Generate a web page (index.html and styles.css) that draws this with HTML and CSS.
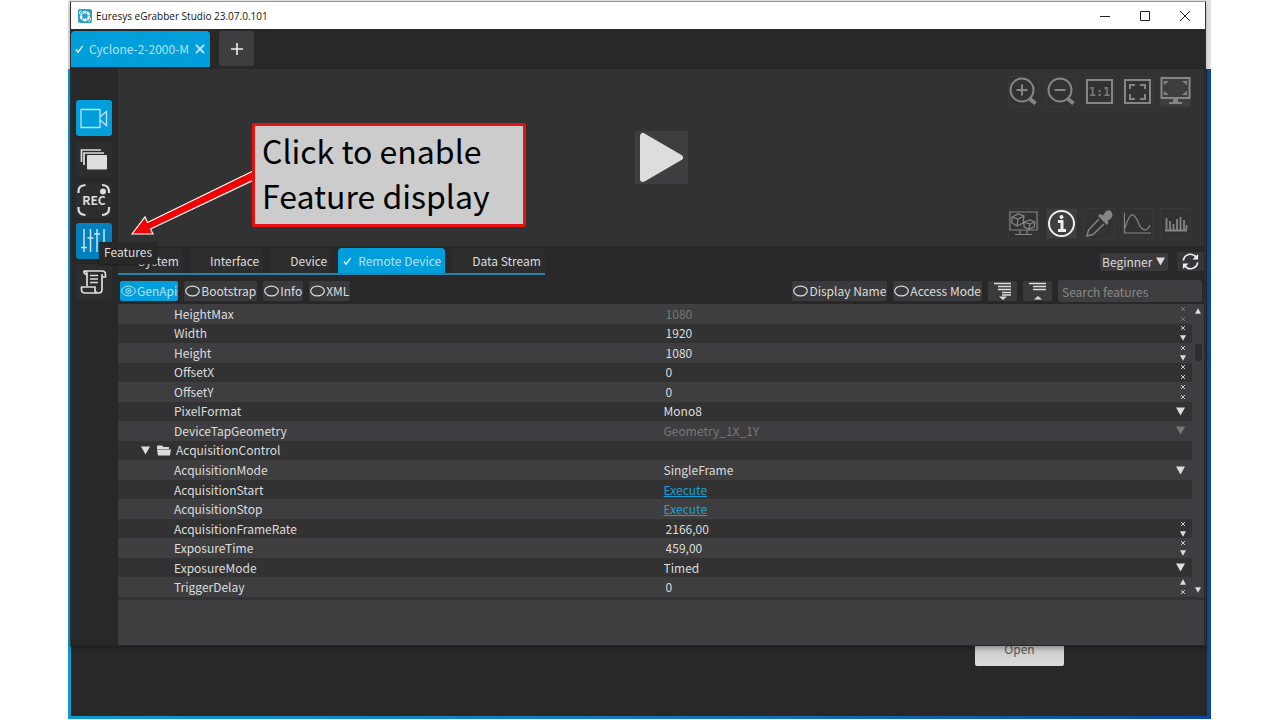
FILE: index.html
```html
<!DOCTYPE html>
<html lang="en">
<head>
<meta charset="utf-8">
<title>Euresys eGrabber Studio</title>
<link rel="stylesheet" href="styles.css">
</head>
<body>
<svg class="defs" aria-hidden="true">
  <symbol id="cross" viewBox="0 0 6 6"><path d="M1 1l4 4M5 1l-4 4" stroke="currentColor" stroke-width=".9"/></symbol>
  <symbol id="down" viewBox="0 0 10 9"><path d="M0 0h10L5 9z" fill="currentColor"/></symbol>
  <symbol id="up" viewBox="0 0 10 9"><path d="M0 9h10L5 0z" fill="currentColor"/></symbol>
  <symbol id="oval" viewBox="0 0 15 12"><ellipse cx="7.5" cy="6" rx="6.8" ry="4.9" fill="none" stroke="currentColor" stroke-width="1.2"/></symbol>
  <symbol id="check" viewBox="0 0 10 10"><path d="M1 5.500l2.500 3L8.500 1.500" fill="none" stroke="currentColor" stroke-width="1.500"/></symbol>
</svg>
<div class="desktop">
  <div class="back-window"><button class="open">Open</button></div>

  <main class="window">
    <header class="titlebar">
      <svg class="logo" viewBox="0 0 14 14"><rect width="14" height="14" rx="2" fill="#2b9fd0"/><circle cx="7" cy="7" r="4" fill="none" stroke="#fff" stroke-width="2.400"/><path d="M7 1l2 3M13 6l-4 1M10 12l-2-3M4 12l1-4M1 6l4 0M4 2l1 3" stroke="#2b9fd0" stroke-width=".8"/><path d="M1.500 5V3l2-1.500M12.500 9v2l-2 1.500" stroke="#e6f5fb" fill="none"/></svg>
      <h1>Euresys eGrabber Studio 23.07.0.101</h1>
      <div class="window-buttons">
        <button aria-label="Minimize"><svg viewBox="0 0 10 10"><path d="M0 5.500h10" stroke="#222"/></svg></button>
        <button aria-label="Maximize"><svg viewBox="0 0 10 10"><path d="M.5.5h9v9h-9z" fill="none" stroke="#222"/></svg></button>
        <button aria-label="Close"><svg viewBox="0 0 10 10"><path d="M0 0l10 10M10 0L0 10" stroke="#222"/></svg></button>
      </div>
    </header>

    <nav class="sessions">
      <button class="session"><svg class="tick"><use href="#check"/></svg>Cyclone-2-2000-M<svg class="close"><use href="#cross"/></svg></button>
      <button class="add" aria-label="New session"><svg viewBox="0 0 12 12"><path d="M6 0v12M0 6h12" stroke="#eee" stroke-width="1.600"/></svg></button>
    </nav>

    <div class="body">
      <aside class="rail">
        <button class="on" aria-label="Camera"><svg viewBox="0 0 36 36" fill="none" stroke="#b9e4f7" stroke-width="1.300"><path d="M5 9.500h19v18H5zM24 17l6.500-5.500v14L24 20z"/></svg></button>
        <button aria-label="Gallery"><svg viewBox="0 0 36 36"><path d="M5.500 21V9H25M8 24v-12H28" fill="none" stroke="#ddd" stroke-width="1.700"/><rect x="11" y="14" width="20" height="14.500" rx="1" fill="#ddd"/></svg></button>
        <button aria-label="Record"><svg viewBox="0 0 36 36"><path d="M2.500 11V9q0-5.500 7-6M2.500 25v2q0 5.500 7 6M33 25v2q0 5.500-7 6M26 3q6.500 0 7 6v2" fill="none" stroke="#ddd" stroke-width="2.200"/><circle cx="27" cy="9.500" r="3" fill="#ddd"/><text x="18" y="23" text-anchor="middle">REC</text></svg></button>
        <button class="on features" aria-label="Features"><svg viewBox="0 0 36 36" stroke="#c4e4f3" stroke-width="1.500"><path d="M8 6v23M14.500 6v23M21 6v23M28 6v23M5 24.500h6M11.500 15h6M18 11h6M25 22h6"/></svg></button>
        <button aria-label="Script"><svg viewBox="0 0 36 36" fill="none" stroke="#ddd" stroke-width="1.700"><path d="M11 22V10q0-3-3-3h18q3.500 0 3.500 3.500V13H26M26 10v15q0 4-3.500 4H9q-3.500 0-3.500-3.500V23H19v3q0 3 3 3M14 11.500h8M14 15h8M14 18.500h8M8 7q-1 2 3 4"/></svg></button>
      </aside>

      <div class="content">
        <section class="viewer">
          <div class="tools">
            <button aria-label="Zoom in"><svg viewBox="0 0 31 31"><circle cx="14" cy="14" r="11.500"/><path d="M14 8.500v11M8.500 14h11"/><path d="M22 23l5.500 4.500" stroke-width="4"/></svg></button>
            <button aria-label="Zoom out"><svg viewBox="0 0 31 31"><circle cx="14" cy="14" r="11.500"/><path d="M8.500 14h11"/><path d="M22 23l5.500 4.500" stroke-width="4"/></svg></button>
            <button aria-label="Actual size"><svg viewBox="0 0 31 31"><path d="M3 4h25v23H3z"/><text x="15.500" y="20" text-anchor="middle">1:1</text></svg></button>
            <button aria-label="Fit"><svg viewBox="0 0 31 31"><path d="M3 4h25v23H3zM8 13V9h5M18 9h5v4M23 18v5h-5M13 23H8v-5"/></svg></button>
            <button class="lit" aria-label="Full screen"><svg viewBox="0 0 31 31"><path d="M1.500 2h28v20h-28z"/><path d="M4 9V5h5zM27 9V5h-5zM4 15v4h5zM27 15v4h-5zM13 22h5v4h4v2H9v-2h4z" fill="#858585" stroke="none"/></svg></button>
          </div>
          <button class="play" aria-label="Play"><svg viewBox="0 0 53 53"><path d="M8 5v43l37-21.500z" fill="#ddd" stroke="#ddd" stroke-width="6" stroke-linejoin="round"/></svg></button>
          <div class="tools">
            <button aria-label="3D view"><svg viewBox="0 0 31 31" class="thin"><path d="M2 4h27v18H2zM12 22v4M19 22v4M7 26.500h17M4 9l6-3 6 2-1 7-6 3-5-3zM4 9l6 2 6-3M10 11l-1 7M16 14l6-2 5 2-1 5-5 2-5-2zM16 14l6 2 5-2M22 16l-1 5"/></svg></button>
            <button class="lit info" aria-label="Info"><svg viewBox="0 0 31 31"><circle cx="15.500" cy="15.500" r="12.500"/><path d="M12 13.500h4v8M12 22.500h8" stroke-width="3"/><circle cx="15.500" cy="9" r="1" /></svg></button>
            <button aria-label="Pick color"><svg viewBox="0 0 31 31"><path d="M15 11L4.500 22 3 28l6-1.500L20 16" stroke-width="1.500"/><path d="M14 8l9 9 1.500-2-1-2c5-3 6-6 4-9s-6-2-8.500 3.500L16 6z" fill="#858585" stroke="none"/></svg></button>
            <button aria-label="Profile"><svg viewBox="0 0 31 31" class="thin"><path d="M2.500 5v20H29M3 20C8 3 12 4 16 14s9 10 12 3"/></svg></button>
            <button aria-label="Histogram"><svg viewBox="0 0 31 31" class="thin"><path d="M5 22.500h22M6.500 10v12M10 13v9M13.500 16v6M17 11v11M20.500 9v13M24 12v10M26.500 17v5" stroke-width="1.800"/></svg></button>
          </div>
        </section>

        <div class="module-bar">
          <nav class="modules">
            <button>System</button><button>Interface</button><button>Device</button><button class="current"><svg class="tick"><use href="#check"/></svg>Remote Device</button><button>Data Stream</button>
          </nav>
          <div class="level">
            <label class="picker"><select aria-label="Visibility level"><option>Beginner</option></select><svg><use href="#down"/></svg></label>
            <button class="refresh" aria-label="Refresh"><svg viewBox="0 0 20 20" fill="none" stroke="#eee" stroke-width="1.800"><path d="M2.500 9A7.500 7.500 0 0 1 16 5.500M17.500 11A7.500 7.500 0 0 1 4 14.500"/><path d="M18 2v6h-6zM2 18v-6h6z" fill="#eee" stroke="none"/></svg></button>
          </div>
        </div>

        <div class="filters">
          <button class="chip active" aria-pressed="true"><svg viewBox="0 0 15 12"><ellipse cx="7.500" cy="6" rx="6.800" ry="4.900" fill="none" stroke="currentColor"/><circle cx="7.500" cy="6" r="2.600" fill="none" stroke="currentColor"/><circle cx="7.500" cy="6" r="1" fill="currentColor"/></svg>GenApi</button>
          <button class="chip"><svg><use href="#oval"/></svg>Bootstrap</button>
          <button class="chip"><svg><use href="#oval"/></svg>Info</button>
          <button class="chip"><svg><use href="#oval"/></svg>XML</button>
          <span class="spacer"></span>
          <button class="chip"><svg><use href="#oval"/></svg>Display Name</button>
          <button class="chip"><svg><use href="#oval"/></svg>Access Mode</button>
          <button class="tree" aria-label="Expand all"><svg viewBox="0 0 29 20"><path d="M6 2.500h17M10 5.500h13M10 8.500h13M14 11.500h9M14 14h9" stroke="#ddd" stroke-width="1.500"/><path d="M11 15.500h8l-4 3.500z" fill="#ddd"/></svg></button>
          <button class="tree" aria-label="Collapse all"><svg viewBox="0 0 29 20"><path d="M6 2.500h17M10 5.500h13M10 8.500h13" stroke="#ddd" stroke-width="1.500"/><path d="M11 18.500h8l-4-3.500z" fill="#ddd"/></svg></button>
          <input class="search" type="text" placeholder="Search features" aria-label="Search features">
        </div>

        <div class="grid-area">
          <table class="features-table">
            <tbody>
            <tr class="off"><th>HeightMax</th><td><input value="1080" aria-label="HeightMax" disabled></td><td class="ctl"><span class="spin"><svg><use href="#cross"/></svg><svg><use href="#cross"/></svg></span></td></tr>
            <tr><th>Width</th><td><input value="1920" aria-label="Width"></td><td class="ctl"><span class="spin"><svg><use href="#cross"/></svg><svg><use href="#down"/></svg></span></td></tr>
            <tr><th>Height</th><td><input value="1080" aria-label="Height"></td><td class="ctl"><span class="spin"><svg><use href="#cross"/></svg><svg><use href="#down"/></svg></span></td></tr>
            <tr><th>OffsetX</th><td><input value="0" aria-label="OffsetX"></td><td class="ctl"><span class="spin"><svg><use href="#cross"/></svg><svg><use href="#cross"/></svg></span></td></tr>
            <tr><th>OffsetY</th><td><input value="0" aria-label="OffsetY"></td><td class="ctl"><span class="spin"><svg><use href="#cross"/></svg><svg><use href="#cross"/></svg></span></td></tr>
            <tr><th>PixelFormat</th><td><select aria-label="PixelFormat"><option>Mono8</option></select></td><td class="ctl"><svg class="drop"><use href="#down"/></svg></td></tr>
            <tr class="off"><th>DeviceTapGeometry</th><td><select aria-label="DeviceTapGeometry" disabled><option>Geometry_1X_1Y</option></select></td><td class="ctl"><svg class="drop"><use href="#down"/></svg></td></tr>
            <tr class="group"><th><span class="branch"><svg class="caret"><use href="#down"/></svg><svg class="folder" viewBox="0 0 14 11"><path d="M0 10V1.500Q0 .5 1 .5h4l1.500 1.500H12V4H0zM0 4.500H14l-1 6H1z" fill="#ddd"/></svg>AcquisitionControl</span></th><td></td><td></td></tr>
            <tr><th>AcquisitionMode</th><td><select aria-label="AcquisitionMode"><option>SingleFrame</option></select></td><td class="ctl"><svg class="drop"><use href="#down"/></svg></td></tr>
            <tr><th>AcquisitionStart</th><td><a href="#">Execute</a></td><td></td></tr>
            <tr><th>AcquisitionStop</th><td><a href="#">Execute</a></td><td></td></tr>
            <tr><th>AcquisitionFrameRate</th><td><input value="2166,00" aria-label="AcquisitionFrameRate"></td><td class="ctl"><span class="spin"><svg><use href="#cross"/></svg><svg><use href="#down"/></svg></span></td></tr>
            <tr><th>ExposureTime</th><td><input value="459,00" aria-label="ExposureTime"></td><td class="ctl"><span class="spin"><svg><use href="#cross"/></svg><svg><use href="#down"/></svg></span></td></tr>
            <tr><th>ExposureMode</th><td><select aria-label="ExposureMode"><option>Timed</option></select></td><td class="ctl"><svg class="drop"><use href="#down"/></svg></td></tr>
            <tr><th>TriggerDelay</th><td><input value="0" aria-label="TriggerDelay"></td><td class="ctl"><span class="spin"><svg><use href="#up"/></svg><svg><use href="#cross"/></svg></span></td></tr>
            </tbody>
          </table>
          <div class="scrollbar"><svg><use href="#up"/></svg><span class="thumb"></span><svg><use href="#down"/></svg></div>
        </div>
        <div class="description"></div>
      </div>
    </div>

    <div class="tooltip" role="tooltip">Features</div>
    <svg class="arrow" viewBox="0 0 124 68"><path d="M0 64L13 47l2.500 5.500L121 1l4 7.500L18.500 59l2.500 5z" fill="#f00000" stroke="#fff" stroke-width="1.200"/></svg>
    <div class="callout">Click to enable Feature display</div>
  </main>
</div>
</body>
</html>
```

FILE: styles.css
```css
* { box-sizing: border-box; }
body {
  margin: 0;
  background: #fff;
  color: #ddd;
  font: 12px/18px "Noto Sans CJK SC", "Noto Sans", sans-serif;
}
button, input, select {
  margin: 0;
  padding: 0;
  border: 0;
  background: none;
  color: inherit;
  font: inherit;
  appearance: none;
}
button { display: flex; align-items: center; justify-content: center; white-space: nowrap; }
svg { display: block; flex: none; }
.defs { width: 0; height: 0; position: absolute; }

.desktop {
  display: grid;
  min-height: 100vh;
  padding: 0 69px 1px 68px;
  background: linear-gradient(#e2e2e2, #e2e2e2) 0 0 / 100% 69px no-repeat content-box;
  background-origin: content-box;
}
.desktop > * { grid-area: 1 / 1; }
.back-window {
  display: flex;
  align-items: flex-end;
  justify-content: flex-end;
  margin-top: 69px;
  padding: 0 147px 53px 0;
  background: linear-gradient(#282828, #282828) 3px 0 / calc(100% - 7px) calc(100% - 3px) no-repeat,
    linear-gradient(90deg, #1098d0, #1470b4 60%, #0c48a0);
}
.open {
  width: 89px;
  height: 34px;
  border-radius: 2px;
  background: linear-gradient(#bbb, #ddd);
  color: #555;
}

.window {
  position: relative;
  align-self: start;
  margin: 1px 5px 0 2px;
  border: 1px solid #888;
  border-color: #999 #303030 #262626;
  background: #282828;
  box-shadow: 0 3px 4px rgba(0, 0, 0, .25);
}
.titlebar {
  display: flex;
  align-items: center;
  height: 27px;
  padding-left: 7px;
  background: #fff;
  color: #111;
}
.logo { width: 14px; height: 14px; margin-right: 4px; }
.titlebar h1 { margin: 0; font: 10px/18px "Open Sans", sans-serif; }
.window-buttons { display: flex; margin-left: auto; }
.window-buttons button { width: 40px; height: 27px; }
.window-buttons svg { width: 10px; height: 10px; }

.sessions { display: flex; gap: 9px; height: 40px; padding-top: 2px; }
.session {
  width: 139px;
  height: 36px;
  gap: 5px;
  border-radius: 4px 4px 0 0;
  background: #009fdc;
  color: #b4e2f6;
}
.tick { width: 9px; height: 10px; color: #e8f7fd; }
.session .close { width: 12px; height: 12px; }
.add { width: 35px; height: 35px; border-radius: 2px; background: #3e3e40; }
.add svg { width: 12px; height: 12px; }

.body { display: flex; }
.rail {
  display: flex;
  flex-direction: column;
  gap: 5px;
  width: 47px;
  padding: 31px 5px 0;
}
.rail button { width: 36px; height: 36px; border-radius: 3px; background: #2d2d2d; }
.rail svg { width: 36px; height: 36px; }
.rail text { fill: #ddd; font-size: 12px; font-weight: 700; }
.rail .on { background: #009fdc; }
.rail .features { background: #0480bc; }

.content { flex: 1; min-width: 0; padding-right: 1px; }
.viewer {
  display: flex;
  flex-direction: column;
  align-items: flex-end;
  justify-content: space-between;
  height: 177px;
  padding: 7px 13px;
  background: #323232;
}
.tools { display: flex; gap: 7px; }
.tools button { width: 31px; height: 31px; border: 1px solid #383838; }
.tools svg { width: 31px; height: 31px; fill: none; stroke: #858585; stroke-width: 2; }
.tools .thin { stroke-width: 1.2; }
.tools text { fill: #777; stroke: none; font: 700 12px "DejaVu Sans Mono", monospace; }
.tools .lit { background: #3e3e40; }
.tools .info svg { stroke: #eee; }
.play { align-self: center; width: 53px; height: 53px; background: #3e3e40; }
.play svg { width: 53px; height: 53px; }

.module-bar {
  display: flex;
  align-items: flex-start;
  justify-content: space-between;
  height: 32px;
  padding-top: 2px;
}
.modules { display: flex; gap: 7px; border-bottom: 2px solid #2682ad; }
.modules button {
  height: 25px;
  padding: 0 4px 0 20px;
  border-radius: 4px 4px 0 0;
  background: #2d2d2d;
}
.modules .current { gap: 6px; padding-left: 5px; background: #009fdc; color: #b4e2f6; }
.level { display: flex; align-items: center; gap: 9px; padding-top: 4px; }
.picker {
  display: flex;
  align-items: center;
  gap: 3px;
  height: 18px;
  padding: 0 3px 0 2px;
  border-radius: 2px;
  background: #3a3a3c;
}
.picker svg { width: 9px; height: 9px; }
.refresh { width: 27px; height: 19px; border-radius: 2px; background: #363638; }
.refresh svg { width: 19px; height: 19px; }

.filters { display: flex; align-items: center; gap: 6px; height: 26px; padding: 0 2px 0 2px; }
.chip { height: 20px; gap: 1px; padding: 0 1px; border-radius: 2px; background: #3a3a3c; }
.chip svg { width: 15px; height: 12px; }
.chip.active { background: #009fdc; color: #b4e2f6; }
.spacer { flex: 1; }
.tree { width: 29px; height: 20px; border-radius: 2px; background: #3a3a3c; }
.tree svg { width: 29px; height: 20px; }
.search { width: 144px; height: 22px; padding: 0 4px; border-radius: 3px; background: #3e3e40; }
.search::placeholder { color: #888; opacity: 1; }

.grid-area { display: flex; }
.features-table { flex: 1; height: 293px; border-collapse: collapse; table-layout: fixed; }
.features-table tr { background: #323232; }
.features-table tr:nth-child(odd) { background: #3e3e40; }
.features-table th, .features-table td { height: 19px; padding: 0; font-weight: 400; line-height: 18px; text-align: left; }
.features-table th { width: 50.8%; padding-left: 56px; }
.features-table .ctl { width: 18px; }
.features-table input { display: block; width: 100%; height: 18px; padding-left: 2px; }
.features-table select { display: block; width: 100%; height: 18px; opacity: 1; }
.features-table a { color: #1aa0d8; }
.features-table .off td { color: #777; }
.features-table .group th { padding-left: 23px; }
.branch { display: flex; align-items: center; }
.caret { width: 9px; height: 9px; margin-right: 7px; }
.folder { width: 14px; height: 11px; margin-right: 5px; }
.spin { display: flex; flex-direction: column; align-items: center; gap: 4px; }
.spin svg { width: 6px; height: 6px; }
.drop { width: 9px; height: 9px; margin-left: 2px; }
.scrollbar {
  display: flex;
  flex-direction: column;
  align-items: center;
  width: 12px;
  padding: 4px 0;
  background: #3e3e40;
}
.scrollbar svg { width: 6px; height: 6px; }
.thumb { width: 7px; height: 17px; margin: 30px 0 auto; border-radius: 3px; background: #2c2c2c; }
.description { height: 48px; border-top: 3px solid #333; background: #3e3e40; }

.tooltip {
  position: absolute;
  left: 28px;
  top: 240px;
  padding: 1px 5px 3px;
  background: #282828;
  box-shadow: 0 1px 2px rgba(0, 0, 0, .4);
}
.arrow { position: absolute; left: 61px; top: 168px; width: 124px; height: 68px; overflow: visible; }
.callout {
  position: absolute;
  left: 181px;
  top: 121px;
  width: 274px;
  padding: 2px 7px 6px;
  border: 3px solid #e81010;
  border-radius: 2px;
  background: #ccc;
  color: #000;
  font-size: 32px;
  line-height: 45px;
}
```
